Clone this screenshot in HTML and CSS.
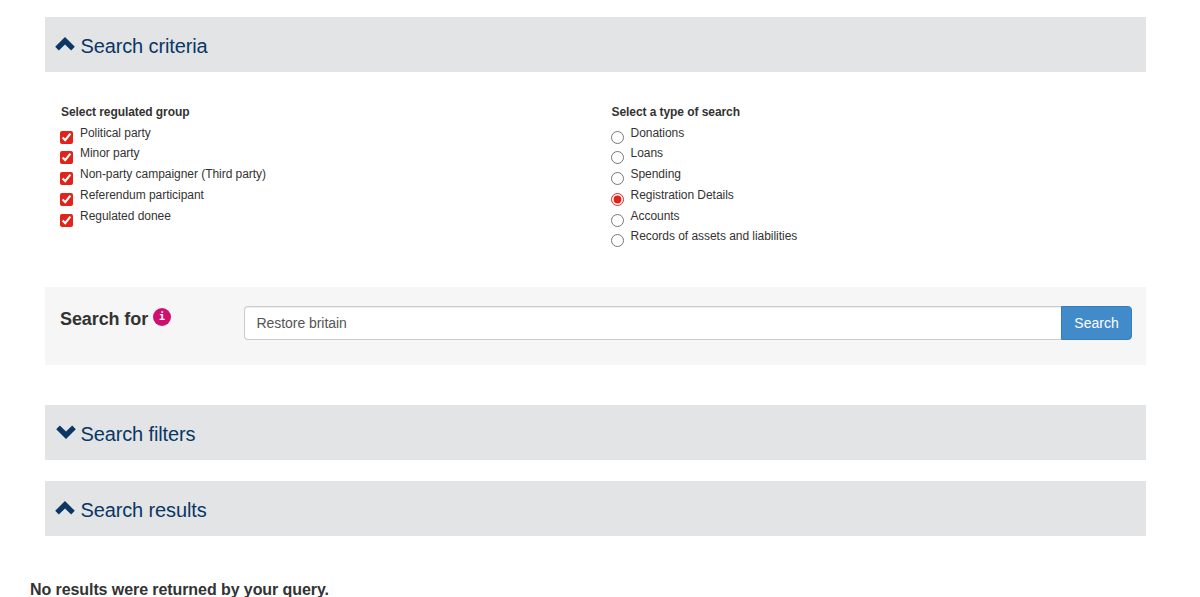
FILE: index.html
```html
<!DOCTYPE html>
<html lang="en">
<head>
<meta charset="utf-8">
<title>Search</title>
<link rel="stylesheet" href="styles.css">
</head>
<body>
<main class="page">
  <section class="panel-head first">
    <svg class="chev" viewBox="0 0 20 14"><path d="M10 0 L19.8 9.8 L16.2 13.4 L10 7.6 L3.8 13.4 L0.2 9.8 Z"/></svg>
    <h2>Search criteria</h2>
  </section>
  <section class="criteria">
    <div class="col">
      <h3>Select regulated group</h3>
      <label class="opt"><input type="checkbox" checked><span>Political party</span></label>
      <label class="opt"><input type="checkbox" checked><span>Minor party</span></label>
      <label class="opt"><input type="checkbox" checked><span>Non-party campaigner (Third party)</span></label>
      <label class="opt"><input type="checkbox" checked><span>Referendum participant</span></label>
      <label class="opt"><input type="checkbox" checked><span>Regulated donee</span></label>
    </div>
    <div class="col">
      <h3>Select a type of search</h3>
      <label class="opt"><input type="radio" name="t"><span>Donations</span></label>
      <label class="opt"><input type="radio" name="t"><span>Loans</span></label>
      <label class="opt"><input type="radio" name="t"><span>Spending</span></label>
      <label class="opt"><input type="radio" name="t" checked><span>Registration Details</span></label>
      <label class="opt"><input type="radio" name="t"><span>Accounts</span></label>
      <label class="opt"><input type="radio" name="t"><span>Records of assets and liabilities</span></label>
    </div>
  </section>
  <section class="search">
    <div class="search-label"><span>Search for</span><span class="info">i</span></div>
    <div class="input-group">
      <input class="field" type="text" value="Restore britain">
      <button class="btn" type="button">Search</button>
    </div>
  </section>
  <section class="panel-head filters">
    <svg class="chev down" viewBox="0 0 20 14"><path d="M10 14 L19.8 4.2 L16.2 0.6 L10 6.4 L3.8 0.6 L0.2 4.2 Z"/></svg>
    <h2>Search filters</h2>
  </section>
  <section class="panel-head results">
    <svg class="chev" viewBox="0 0 20 14"><path d="M10 0 L19.8 9.8 L16.2 13.4 L10 7.6 L3.8 13.4 L0.2 9.8 Z"/></svg>
    <h2>Search results</h2>
  </section>
</main>
<p class="none">No results were returned by your query.</p>
</body>
</html>
```
FILE: styles.css
```css
html, body { margin: 0; padding: 0; overflow: hidden; height: 597px; }
body { font-family: "Liberation Sans", Arial, sans-serif; color: #333; background: #fff; }
.page { width: 1101px; margin-left: 45px; padding-top: 17px; }
.panel-head { height: 55px; background: #e3e4e6; display: flex; align-items: center; padding: 0 0 0 10px; box-sizing: border-box; }
.panel-head h2 { margin: 0 0 0 5.5px; font-size: 20px; font-weight: 400; line-height: 22px; letter-spacing: -0.13px; color: #0a3764; position: relative; top: 1px; }
.chev { width: 20px; height: 14px; fill: #0a3764; flex: none; position: relative; top: -1px; }
.chev.down { margin-left: 1px; margin-right: -1px; top: -1px; }
.criteria { display: flex; height: 215px; box-sizing: border-box; padding: 33px 0 0 16px; }
.col { width: 550.5px; flex: none; }
.col h3 { margin: 0 0 5.5px; font-size: 12px; font-weight: 700; line-height: 15px; letter-spacing: -0.07px; color: #333; }
.opt { display: flex; height: 20.8px; font-size: 12px; line-height: 15px; letter-spacing: -0.04px; color: #333; }
.opt input { margin: 5px 7px 0 -1px; width: 13px; height: 13px; accent-color: #e2231a; flex: none; }
.search { height: 78px; background: #f6f6f6; display: flex; padding: 19px 14px 0 15px; box-sizing: border-box; }
.search-label { width: 184px; flex: none; display: flex; align-items: flex-start; font-size: 18px; font-weight: 700; line-height: 26px; letter-spacing: -0.1px; color: #333; }
.info { width: 18px; height: 18px; border-radius: 50%; background: #d0106e; color: #fff; font: 700 10px/18px "DejaVu Sans Mono", monospace; letter-spacing: 0; text-align: center; margin: 2px 0 0 5px; }
.input-group { display: flex; flex: 1; height: 34px; }
.field { flex: 1; min-width: 0; height: 34px; box-sizing: border-box; border: 1px solid #ccc; border-right: 0; border-radius: 4px 0 0 4px; padding: 0 11.5px; font: 14px "Liberation Sans", Arial, sans-serif; letter-spacing: -0.05px; color: #555; background: #fff; box-shadow: inset 0 1px 1px rgba(0,0,0,.075); }
.btn { width: 71px; height: 34px; border: 1px solid #357ebd; border-radius: 0 4px 4px 0; background: #428bca; color: #fff; font: 14px "Liberation Sans", Arial, sans-serif; padding: 0; }
.filters { margin-top: 40px; }
.results { margin-top: 21px; }
.none { margin: 45px 0 0 30px; font-size: 16px; font-weight: 700; line-height: 18px; letter-spacing: -0.08px; color: #333; }
```
